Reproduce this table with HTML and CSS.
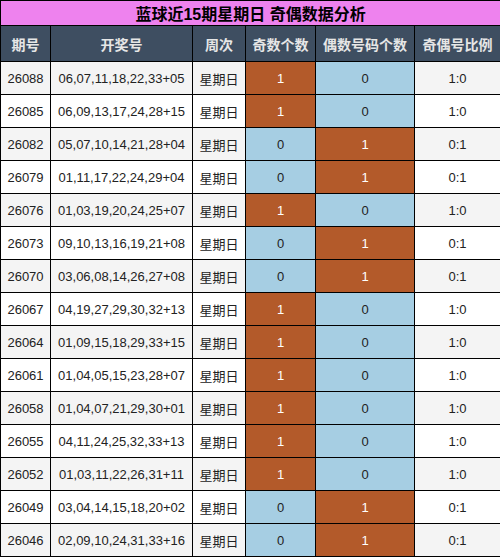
FILE: index.html
```html
<!DOCTYPE html>
<html>
<head>
  <meta charset="utf-8">
  <title>蓝球近15期星期日 奇偶数据分析</title>
  <link rel="stylesheet" href="styles.css">
</head>
<body>
  <table class="tabela">
    <colgroup>
      <col class="c-qihao">
      <col class="c-kaijiang">
      <col class="c-zhou">
      <col class="c-ji">
      <col class="c-ou">
      <col class="c-bili">
    </colgroup>
    <thead>
      <tr><th colspan="6" class="titulo">蓝球近15期星期日 奇偶数据分析</th></tr>
      <tr class="cabecalho">
        <th>期号</th><th>开奖号</th><th>周次</th><th>奇数个数</th><th>偶数号码个数</th><th>奇偶号比例</th>
      </tr>
    </thead>
    <tbody>
      <tr><td>26088</td><td>06,07,11,18,22,33+05</td><td>星期日</td><td class="laranja">1</td><td class="azul">0</td><td>1:0</td></tr>
      <tr><td>26085</td><td>06,09,13,17,24,28+15</td><td>星期日</td><td class="laranja">1</td><td class="azul">0</td><td>1:0</td></tr>
      <tr><td>26082</td><td>05,07,10,14,21,28+04</td><td>星期日</td><td class="azul">0</td><td class="laranja">1</td><td>0:1</td></tr>
      <tr><td>26079</td><td>01,11,17,22,24,29+04</td><td>星期日</td><td class="azul">0</td><td class="laranja">1</td><td>0:1</td></tr>
      <tr><td>26076</td><td>01,03,19,20,24,25+07</td><td>星期日</td><td class="laranja">1</td><td class="azul">0</td><td>1:0</td></tr>
      <tr><td>26073</td><td>09,10,13,16,19,21+08</td><td>星期日</td><td class="azul">0</td><td class="laranja">1</td><td>0:1</td></tr>
      <tr><td>26070</td><td>03,06,08,14,26,27+08</td><td>星期日</td><td class="azul">0</td><td class="laranja">1</td><td>0:1</td></tr>
      <tr><td>26067</td><td>04,19,27,29,30,32+13</td><td>星期日</td><td class="laranja">1</td><td class="azul">0</td><td>1:0</td></tr>
      <tr><td>26064</td><td>01,09,15,18,29,33+15</td><td>星期日</td><td class="laranja">1</td><td class="azul">0</td><td>1:0</td></tr>
      <tr><td>26061</td><td>01,04,05,15,23,28+07</td><td>星期日</td><td class="laranja">1</td><td class="azul">0</td><td>1:0</td></tr>
      <tr><td>26058</td><td>01,04,07,21,29,30+01</td><td>星期日</td><td class="laranja">1</td><td class="azul">0</td><td>1:0</td></tr>
      <tr><td>26055</td><td>04,11,24,25,32,33+13</td><td>星期日</td><td class="laranja">1</td><td class="azul">0</td><td>1:0</td></tr>
      <tr><td>26052</td><td>01,03,11,22,26,31+11</td><td>星期日</td><td class="laranja">1</td><td class="azul">0</td><td>1:0</td></tr>
      <tr><td>26049</td><td>03,04,14,15,18,20+02</td><td>星期日</td><td class="azul">0</td><td class="laranja">1</td><td>0:1</td></tr>
      <tr><td>26046</td><td>02,09,10,24,31,33+16</td><td>星期日</td><td class="azul">0</td><td class="laranja">1</td><td>0:1</td></tr>
    </tbody>
  </table>
</body>
</html>
```
FILE: styles.css
```css
body {
  margin: 0;
  background-color: white;
  font-family: "Liberation Sans", "Noto Sans CJK SC", sans-serif;
}

.tabela {
  width: 500px;
  border-collapse: collapse;
  table-layout: fixed;
}

.c-qihao { width: 50px; }
.c-kaijiang { width: 142px; }
.c-zhou { width: 53px; }
.c-ji { width: 70px; }
.c-ou { width: 99px; }
.c-bili { width: 86px; }

.tabela th,
.tabela td {
  border: 1px solid black;
  padding: 0;
  text-align: center;
  white-space: nowrap;
}

.titulo {
  height: 24px;
  background-color: #ee82ee;
  color: black;
  font-size: 16px;
  font-weight: bold;
}

.cabecalho th {
  height: 35px;
  background-color: #3e4e61;
  color: #e6e6e6;
  font-size: 14px;
  font-weight: bold;
}

.tabela td {
  height: 32px;
  font-size: 13px;
  color: #222;
}

.tabela tbody tr:nth-child(odd) td {
  background-color: #f4f4f4;
}

.tabela tbody tr td.laranja {
  background-color: #b35a2a;
  color: white;
}

.tabela tbody tr td.azul {
  background-color: #a6cee3;
  color: #222;
}
```
